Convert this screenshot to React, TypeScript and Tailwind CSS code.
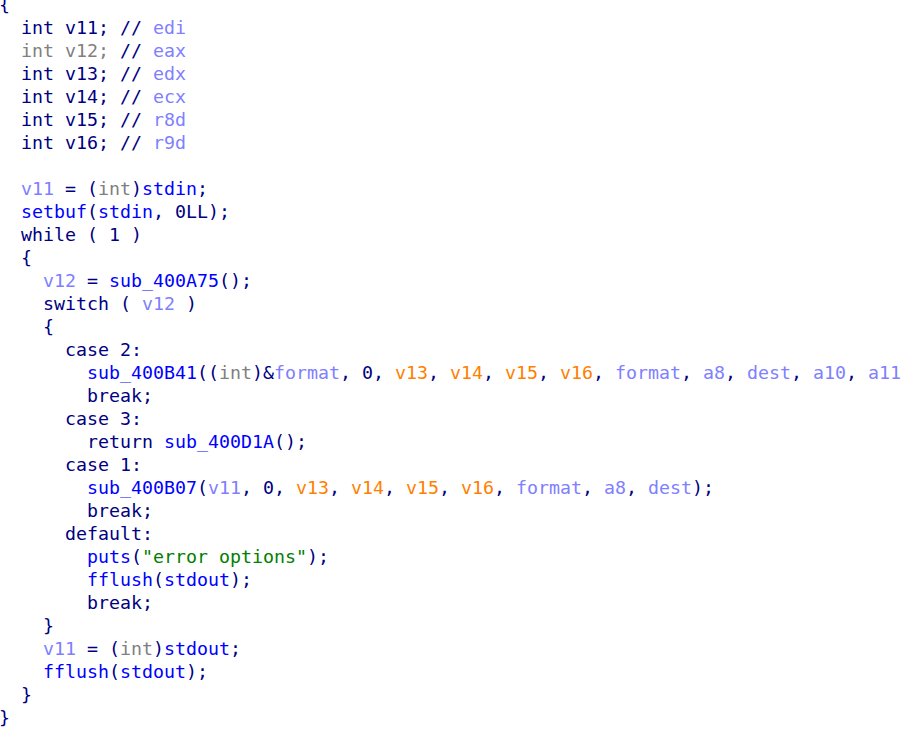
type Tok = [string, string]

const colors: Record<string, string> = {
  n: 'text-[#000080]',
  b: 'text-[#0000ff]',
  v: 'text-[#8080ff]',
  g: 'text-[#808080]',
  o: 'text-[#ff8000]',
  s: 'text-[#008000]',
}

const N = (t: string): Tok => [t, 'n']
const B = (t: string): Tok => [t, 'b']
const V = (t: string): Tok => [t, 'v']
const G = (t: string): Tok => [t, 'g']
const O = (t: string): Tok => [t, 'o']
const S = (t: string): Tok => [t, 's']

const args = (...names: Tok[]): Tok[] => names.flatMap((t, i) => (i === 0 ? [t] : [N(', '), t]))

const lines: Tok[][] = [
  [N('{')],
  [N('  int v11; //'), V(' edi')],
  [G('  int v12;'), N(' //'), V(' eax')],
  [N('  int v13; //'), V(' edx')],
  [N('  int v14; //'), V(' ecx')],
  [N('  int v15; //'), V(' r8d')],
  [N('  int v16; //'), V(' r9d')],
  [N(' ')],
  [N('  '), V('v11'), N(' = ('), G('int'), N(')'), B('stdin'), N(';')],
  [N('  '), B('setbuf'), N('('), B('stdin'), N(', 0LL);')],
  [N('  while ( 1 )')],
  [N('  {')],
  [N('    '), V('v12'), N(' = '), B('sub_400A75'), N('();')],
  [N('    switch ( '), V('v12'), N(' )')],
  [N('    {')],
  [N('      case 2:')],
  [
    N('        '),
    B('sub_400B41'),
    N('(('),
    G('int'),
    N(')&'),
    V('format'),
    N(', '),
    ...args(N('0'), O('v13'), O('v14'), O('v15'), O('v16'), V('format'), V('a8'), V('dest'), V('a10'), V('a11')),
    N(');'),
  ],
  [N('        break;')],
  [N('      case 3:')],
  [N('        return '), B('sub_400D1A'), N('();')],
  [N('      case 1:')],
  [
    N('        '),
    B('sub_400B07'),
    N('('),
    ...args(V('v11'), N('0'), O('v13'), O('v14'), O('v15'), O('v16'), V('format'), V('a8'), V('dest')),
    N(');'),
  ],
  [N('        break;')],
  [N('      default:')],
  [N('        '), B('puts'), N('('), S('"error options"'), N(');')],
  [N('        '), B('fflush'), N('('), B('stdout'), N(');')],
  [N('        break;')],
  [N('    }')],
  [N('    '), V('v11'), N(' = ('), G('int'), N(')'), B('stdout'), N(';')],
  [N('    '), B('fflush'), N('('), B('stdout'), N(');')],
  [N('  }')],
  [N('}')],
]

export default function App() {
  return (
    <div className="w-[904px] h-[747px] overflow-hidden bg-white">
      <pre className="-mt-[7px] -ml-px font-['DejaVu_Sans_Mono',monospace] text-[18.27px] leading-[23px] whitespace-pre">
        {lines.map((line, i) => (
          <div key={i} className="h-[23px]">
            {line.map(([text, c], j) => (
              <span key={j} className={colors[c]}>
                {text}
              </span>
            ))}
          </div>
        ))}
      </pre>
    </div>
  )
}
